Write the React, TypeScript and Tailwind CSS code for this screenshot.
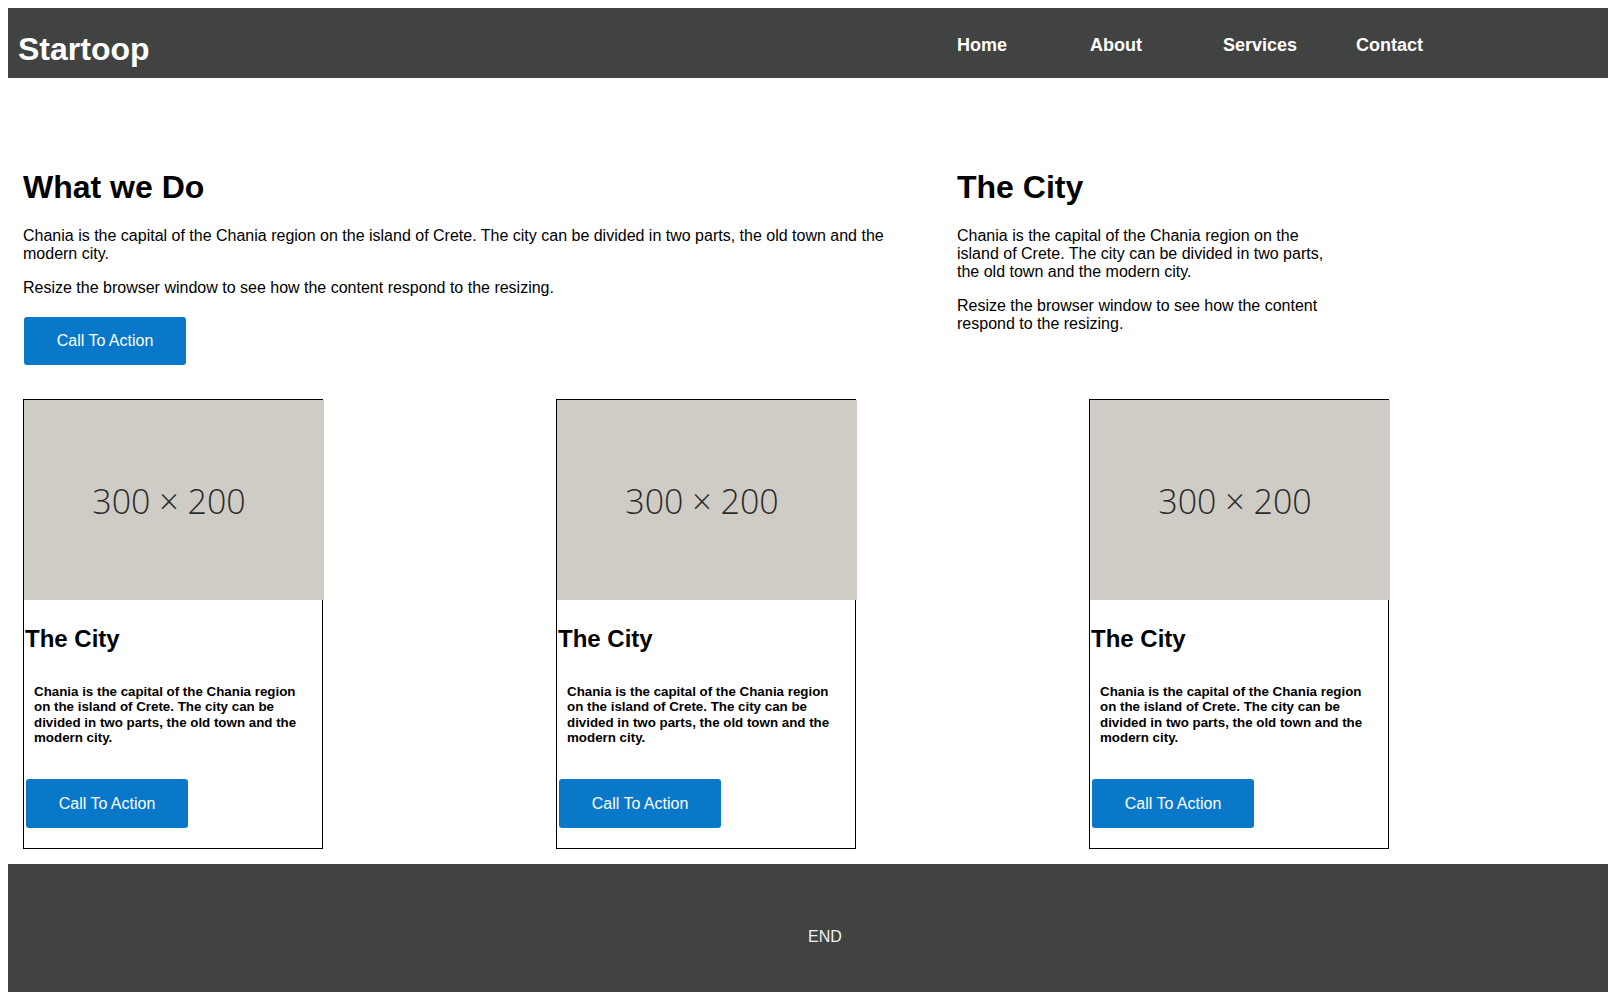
import React from 'react';

const navLinks = ['Home', 'About', 'Services', 'Contact'];

const cityText =
  'Chania is the capital of the Chania region on the island of Crete. The city can be divided in two parts, the old town and the modern city.';
const resizeText = 'Resize the browser window to see how the content respond to the resizing.';

function Card() {
  return (
    <div className="w-[300px] border border-black">
      {/* placeholder image, 300 x 200 */}
      <div className="w-[300px] h-[200px] bg-[#cfccc6] flex items-center justify-center pr-[10px] pt-[4px]">
        <span className="font-['Open_Sans',sans-serif] font-light text-[34px] text-[#2b2b2b]">300 × 200</span>
      </div>
      <h3 className="mt-[25px] ml-[1px] text-[24px] leading-[1.15] font-bold">The City</h3>
      <p className="mt-[31.5px] px-[10px] text-[13.33px] leading-[1.15] font-bold">{cityText}</p>
      <button className="mt-[34px] mb-[20px] ml-[2px] w-[162px] h-[49px] rounded-[3px] bg-[#0a78c8] text-white text-[16px] font-['Liberation_Sans',Arial,sans-serif]">
        Call To Action
      </button>
    </div>
  );
}

export default function App() {
  return (
    <div className="min-h-screen bg-white pt-2 pl-2 pb-2 text-black font-['Liberation_Sans',Arial,sans-serif]">
      {/* Header */}
      <header className="h-[70px] bg-[#414342] flex items-start text-white">
        <div className="w-[949px] pl-[10px] pt-[22.5px] text-[32px] leading-[1.15] font-bold">Startoop</div>
        <ul className="flex pt-[27px]">
          {navLinks.map((link) => (
            <li key={link} className="w-[133px] text-[18px] leading-[1.15] font-bold">
              {link}
            </li>
          ))}
        </ul>
      </header>

      {/* Intro */}
      <section className="flex pt-[90.5px] pl-[15px]">
        <div className="w-[934px]">
          <h1 className="text-[32px] leading-[1.15] font-bold mb-[21.4px]">What we Do</h1>
          <p className="w-[900px] text-[16px] leading-[1.15] mb-4">{cityText}</p>
          <p className="text-[16px] leading-[1.15]">{resizeText}</p>
          <button className="mt-[19px] ml-[1px] w-[162px] h-[48px] rounded-[3px] bg-[#0a78c8] text-white text-[16px] font-['Liberation_Sans',Arial,sans-serif]">
            Call To Action
          </button>
        </div>
        <div className="w-[375px]">
          <h1 className="text-[32px] leading-[1.15] font-bold mb-[21.4px]">The City</h1>
          <p className="text-[16px] leading-[1.15] mb-[15px]">{cityText}</p>
          <p className="text-[16px] leading-[1.15]">{resizeText}</p>
        </div>
      </section>

      {/* Cards */}
      <section className="mt-[34px] pl-[15px]">
        <div className="w-[1366px] flex justify-between">
          <Card />
          <Card />
          <Card />
        </div>
      </section>

      {/* Footer */}
      <footer className="mt-[15px] h-[128px] bg-[#414342] text-[#f2f2f2] pl-[800px] pt-[60.7px]">
        <span className="text-[16px] leading-[1.15]">END</span>
      </footer>
    </div>
  );
}
